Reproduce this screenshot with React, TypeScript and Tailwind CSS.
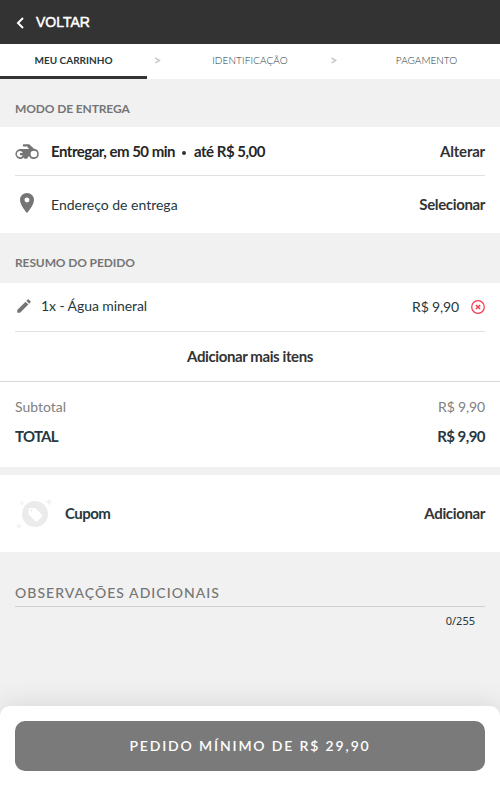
import React from 'react';
import { MdEdit, MdPlace } from 'react-icons/md';

function MotorcycleIcon() {
  return (
    <svg viewBox="0 0 24 24" fill="currentColor" className="size-6 shrink-0 text-[#757575]">
      <path
        fillRule="evenodd"
        d="M8 4.2h6.2l4.8 4.6A5.1 5.1 0 1 1 14 16l-2 2.8H9.5L8.9 17.6A5 5 0 1 1 5 9h9.1L12.2 6.4H8zM18.9 10.7a3.3 3.3 0 1 0 0 6.6a3.3 3.3 0 1 0 0-6.6zM5 11a3.1 3.1 0 1 0 2.8 4.3H5v-2.2h2.8A3.1 3.1 0 0 0 5 11z"
      />
    </svg>
  );
}

function RemoveIcon() {
  return (
    <svg viewBox="0 0 14 14" fill="none" stroke="#f8384b" className="size-3.5 shrink-0">
      <circle cx="7" cy="7" r="6.3" strokeWidth="1.2" />
      <path d="M4.9 4.9l4.2 4.2M9.1 4.9L4.9 9.1" strokeWidth="1.4" />
    </svg>
  );
}

function CouponIcon() {
  return (
    <svg viewBox="0 0 40 40" className="size-10 shrink-0">
      <circle cx="20" cy="20" r="13" fill="#ebebeb" />
      <circle cx="7" cy="9" r="2" fill="#f5f5f5" />
      <path d="M34 4l1.2 2.8L38 8l-2.8 1.2L34 12l-1.2-2.8L30 8l2.8-1.2z" fill="#f3f3f3" />
      <path d="M4 28.5l1 2.5 2.5 1-2.5 1-1 2.5-1-2.5-2.5-1 2.5-1z" fill="#f3f3f3" />
      <path
        d="M13.7 15.5v4.3c0 .5.2.9.5 1.2l6 6c.7.7 1.7.7 2.4 0l4.2-4.2c.7-.7.7-1.7 0-2.4l-6-6c-.3-.3-.7-.5-1.2-.5h-4.3c-.9 0-1.6.7-1.6 1.6z"
        fill="#fff"
      />
      <circle cx="16.3" cy="16.5" r="1.1" fill="#ebebeb" />
    </svg>
  );
}

interface SectionTitleProps {
  children: React.ReactNode;
}

function SectionTitle({ children }: SectionTitleProps) {
  return <h2 className="px-[15px] text-[12px] leading-5 font-bold tracking-[-0.12px] text-[#757575]">{children}</h2>;
}

export default function App() {
  return (
    <div className="flex h-[786px] w-full flex-col overflow-hidden bg-[#f1f1f1] font-['Lato',sans-serif] text-sm text-[#263840]">
      <header className="flex h-11 shrink-0 items-center bg-[#333] pl-[15px] text-white">
        <svg viewBox="0 0 10 12" fill="none" stroke="currentColor" strokeWidth="2" className="mt-0.5 h-3 w-2.5">
          <path d="M8 1L3 6l5 5" />
        </svg>
        <span className="ml-[11px] font-['Liberation_Sans',sans-serif] text-sm [-webkit-text-stroke:0.5px_white]">
          VOLTAR
        </span>
      </header>

      <nav className="flex h-[35px] shrink-0 bg-white text-[10px] leading-[33px]">
        <div className="w-[147px] border-b-3 border-[#333] text-center font-bold">MEU CARRINHO</div>
        <div className="w-[21px] text-center text-[13px] font-bold text-[#c4c4c4]">&gt;</div>
        <div className="w-[164px] text-center font-light tracking-[0.1px]">IDENTIFICAÇÃO</div>
        <div className="w-1 text-[13px] font-bold text-[#c4c4c4]">
          <span className="-ml-0.5">&gt;</span>
        </div>
        <div className="ml-[17px] flex-1 text-center font-light">PAGAMENTO</div>
      </nav>

      <div className="flex h-12 shrink-0 flex-col justify-end pb-2">
        <SectionTitle>MODO DE ENTREGA</SectionTitle>
      </div>
      <section className="h-[106px] shrink-0 bg-white px-[15px]">
        <div className="flex h-[49px] items-center border-b border-[#e0e0e0] pt-0.5 text-[15px] font-bold text-[#333]">
          <MotorcycleIcon />
          <span className="ml-3 tracking-[-0.5px] text-[#262626]">Entregar, em 50 min</span>
          <span className="mt-0.5 mr-2 ml-[7px] size-1 rounded-full bg-[#333]" />
          <span className="tracking-[-0.5px] text-[#262626]">até R$ 5,00</span>
          <span className="ml-auto tracking-[-0.2px]">Alterar</span>
        </div>
        <div className="flex h-[57px] items-center">
          <MdPlace size={24} className="mb-1 shrink-0 text-[#757575]" />
          <span className="ml-3">Endereço de entrega</span>
          <span className="ml-auto text-[15px] font-bold tracking-[-0.36px] text-[#333]">Selecionar</span>
        </div>
      </section>

      <div className="flex h-[50px] shrink-0 flex-col justify-end pb-[10px]">
        <SectionTitle>RESUMO DO PEDIDO</SectionTitle>
      </div>
      <section className="h-[184px] shrink-0 bg-white">
        <div className="mx-[15px] flex h-[49px] items-center border-b border-[#e0e0e0]">
          <MdEdit size={18} className="mb-0.5 shrink-0 text-[#757575]" />
          <span className="mb-0.5 ml-2 tracking-[-0.08px]">1x - Água mineral</span>
          <span className="mr-3 ml-auto tracking-[-0.15px]">R$ 9,90</span>
          <RemoveIcon />
        </div>
        <div className="flex h-[50px] items-center justify-center border-b border-[#d9d9d9] text-[15px] font-bold tracking-[-0.4px] text-[#333]">
          Adicionar mais itens
        </div>
        <div className="px-[15px] pt-[15px] leading-5">
          <div className="flex justify-between text-[#808080]">
            <span>Subtotal</span>
            <span className="tracking-[-0.15px]">R$ 9,90</span>
          </div>
          <div className="mt-[9px] flex justify-between text-[15px] font-bold">
            <span className="tracking-[-0.75px]">TOTAL</span>
            <span className="tracking-[-0.55px]">R$ 9,90</span>
          </div>
        </div>
      </section>

      <section className="mt-2 flex h-[77px] shrink-0 items-center bg-white px-[15px] text-[15px] font-bold">
        <CouponIcon />
        <span className="ml-2.5 tracking-[-0.55px]">Cupom</span>
        <span className="ml-auto tracking-[-0.36px] text-[#333]">Adicionar</span>
      </section>

      <section className="mx-[15px] pt-[31px]">
        <div className="border-b border-[#d0d0d0] pb-[3px] text-sm leading-5 font-medium tracking-[1.03px] text-[#757575]">
          OBSERVAÇÕES ADICIONAIS
        </div>
        <div className="mt-1.5 pr-2.5 text-right font-['Noto_Sans',sans-serif] text-[11px] leading-4">0/255</div>
      </section>

      <footer className="mt-auto h-20 shrink-0 rounded-t-[10px] bg-white px-[15px] pt-[15px] shadow-[0_0_30px_rgba(0,0,0,0.12)]">
        <button className="h-[50px] w-full rounded-[10px] bg-[#7a7a7a] text-sm font-semibold tracking-[1.85px] text-white">
          PEDIDO MÍNIMO DE R$ 29,90
        </button>
      </footer>
    </div>
  );
}
